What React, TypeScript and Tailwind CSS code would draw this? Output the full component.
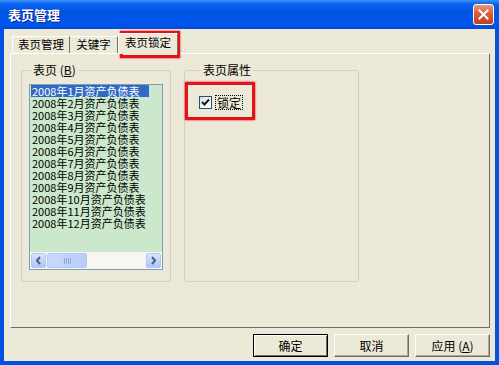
import React from "react"

const sheets = [
  "2008年1月资产负债表",
  "2008年2月资产负债表",
  "2008年3月资产负债表",
  "2008年4月资产负债表",
  "2008年5月资产负债表",
  "2008年6月资产负债表",
  "2008年7月资产负债表",
  "2008年8月资产负债表",
  "2008年9月资产负债表",
  "2008年10月资产负债表",
  "2008年11月资产负债表",
  "2008年12月资产负债表",
]

function CloseButton() {
  return (
    <div className="w-[21px] h-[21px] rounded-[3px] border border-white bg-[linear-gradient(180deg,#E9967A_0%,#D9603B_45%,#C2401C_100%)] flex items-center justify-center">
      <svg width="11" height="11" viewBox="0 0 11 11">
        <path d="M1.5 1.5 L9.5 9.5 M9.5 1.5 L1.5 9.5" stroke="#fff" strokeWidth="2" strokeLinecap="square" />
      </svg>
    </div>
  )
}

function ScrollButton({ dir }: { dir: "left" | "right" }) {
  return (
    <div className="w-[15px] h-[15px] rounded-[2px] border border-[#B4C8F6] bg-[linear-gradient(180deg,#DCE6FD_0%,#C3D4FC_50%,#B0C4F4_100%)] flex items-center justify-center">
      <svg width="7" height="9" viewBox="0 0 7 9">
        {dir === "left" ? (
          <path d="M5 1 L2 4.5 L5 8" stroke="#4D6185" strokeWidth="2" fill="none" />
        ) : (
          <path d="M2 1 L5 4.5 L2 8" stroke="#4D6185" strokeWidth="2" fill="none" />
        )}
      </svg>
    </div>
  )
}

function SheetList() {
  return (
    <div className="w-[134px] h-[186px] border border-[#7F9DB9] bg-[#CCE8CC] flex flex-col">
      <div className="flex-1 pt-[0px] pl-[1px] overflow-hidden">
        {sheets.map((s, i) => (
          <div
            key={s}
            className={
              i === 0
                ? "w-[118px] h-[12px] leading-[12px] text-[11px] bg-[#316AC5] text-white whitespace-nowrap pl-[1px]"
                : "w-[118px] h-[12px] leading-[12px] text-[11px] text-black whitespace-nowrap pl-[1px]"
            }
          >
            {s}
          </div>
        ))}
      </div>
      {/* 水平滚动条 */}
      <div className="h-[17px] bg-[#F7F6F1] flex items-center px-[1px] gap-[1px]">
        <ScrollButton dir="left" />
        <div className="w-[40px] h-[15px] rounded-[2px] border border-[#B4C8F6] bg-[linear-gradient(90deg,#C9D8FC_0%,#BACDFA_100%)] flex items-center justify-center gap-[1px]">
          <div className="w-px h-[6px] bg-[#8DA6E3]" />
          <div className="w-px h-[6px] bg-[#8DA6E3]" />
          <div className="w-px h-[6px] bg-[#8DA6E3]" />
          <div className="w-px h-[6px] bg-[#8DA6E3]" />
        </div>
        <div className="flex-1" />
        <ScrollButton dir="right" />
      </div>
    </div>
  )
}

function WinButton({ children, primary }: { children: React.ReactNode; primary?: boolean }) {
  return (
    <button
      className={
        primary
          ? "w-[75px] h-[23px] bg-[#ECE9D8] border border-black shadow-[inset_1px_1px_0_#fff,inset_-1px_-1px_0_#716F64] text-[12px] leading-none"
          : "w-[75px] h-[23px] bg-[#ECE9D8] border-t border-l border-t-white border-l-white border-r border-b border-r-[#716F64] border-b-[#716F64] shadow-[inset_-1px_-1px_0_#ACA899] text-[12px] leading-none"
      }
    >
      {children}
    </button>
  )
}

export default function App() {
  return (
    <div className="relative w-[499px] h-[365px] bg-[#0451E0] flex flex-col font-['Noto_Sans_CJK_SC',sans-serif] text-black">
      {/* 标题栏 */}
      <div className="h-[29px] flex items-center justify-between pl-[8px] pr-[5px] bg-[linear-gradient(180deg,#3D95FF_0%,#0A62F0_14%,#0054E3_40%,#0058EE_80%,#004BD8_100%)]">
        <span className="text-white font-bold text-[13px] leading-none [text-shadow:1px_1px_0_#0A1E8C]">表页管理</span>
        <CloseButton />
      </div>

      <div className="flex-1 mx-[4px] mb-[4px] bg-[#ECE9D8] flex flex-col pl-[6px] pr-[5px] pt-[4px]">
        {/* 标签页 */}
        <div className="h-[20px] flex items-end pl-[2px]">
          <div className="w-[58px] h-[17px] border-t border-l border-r border-t-white border-l-white border-r-[#716F64] rounded-tl-[2px] flex items-center justify-center text-[11.5px] leading-none">
            表页管理
          </div>
          <div className="w-[48px] h-[17px] border-t border-r border-t-white border-r-[#716F64] flex items-center justify-center text-[11.5px] leading-none">
            关键字
          </div>
          <div className="relative z-10 w-[60px] h-[21px] -mb-px bg-[#ECE9D8] border-t border-l border-r border-t-white border-l-white border-r-[#716F64] rounded-tl-[2px] flex items-start pt-[3px] justify-center text-[11.5px] leading-none">
            表页锁定
          </div>
        </div>

        {/* 标签面板 */}
        <div className="h-[275px] border-t border-l border-t-white border-l-white border-r border-b border-r-[#716F64] border-b-[#716F64] flex gap-[13px] pl-[10px] pt-[9px]">
          <fieldset className="w-[150px] h-[219px] border border-[#D0D0BF] rounded-[3px] pl-[7px] pr-[7px] pt-[7px]">
            <legend className="ml-[2px] px-[2px] text-[12px] leading-[14px]">
              表页 (<span className="underline">B</span>)
            </legend>
            <SheetList />
          </fieldset>

          <fieldset className="w-[175px] h-[219px] border border-[#D0D0BF] rounded-[3px] pl-[14px] pt-[18px]">
            <legend className="ml-[2px] px-[2px] text-[12px] leading-[14px]">表页属性</legend>
            <div className="flex items-center gap-[3px]">
              <div className="w-[13px] h-[13px] border border-[#1C5180] bg-[linear-gradient(135deg,#DCDCD7_0%,#F5F5F2_60%,#FFFFFF_100%)] flex items-center justify-center">
                <svg width="9" height="9" viewBox="0 0 9 9">
                  <path d="M1 4 L3.5 6.5 L8 1.5" stroke="#1A1A1A" strokeWidth="2" fill="none" />
                </svg>
              </div>
              <span className="border border-dotted border-black px-[1px] text-[12px] leading-[13px]">锁定</span>
            </div>
          </fieldset>
        </div>

        {/* 底部按钮 */}
        <div className="flex justify-end gap-[6px] mt-[6px]">
          <WinButton primary>确定</WinButton>
          <WinButton>取消</WinButton>
          <WinButton>
            应用 (<span className="underline">A</span>)
          </WinButton>
        </div>
      </div>

      {/* 红色标注框 */}
      <div className="absolute left-[120px] top-[31px] w-[60px] h-[27px] border-[3px] border-[#E3121B] shadow-[0_0_2px_#E3121B]" />
      <div className="absolute left-[185px] top-[82px] w-[70px] h-[38px] border-[3px] border-[#E3121B] shadow-[0_0_2px_#E3121B]" />
    </div>
  )
}
